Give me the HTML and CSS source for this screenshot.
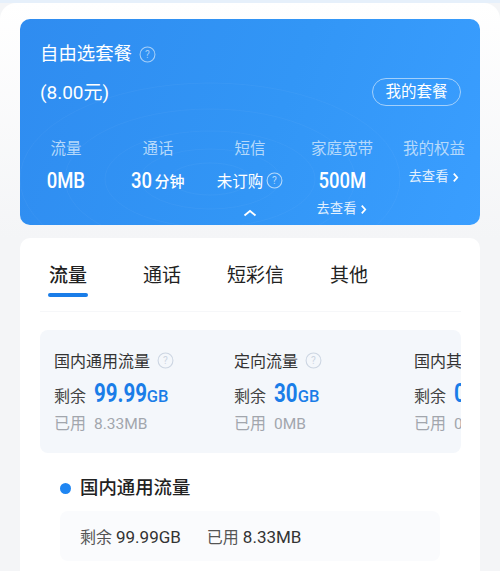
FILE: index.html
```html
<!DOCTYPE html>
<html lang="zh-CN">
<head>
    <meta charset="UTF-8" />
    <meta name="viewport" content="width=device-width, initial-scale=1" />
    <title>自由选套餐</title>
    <link rel="stylesheet" href="styles.css">
</head>
<body>
    <div class="top-panel">
        <div class="plan-card">
            <svg class="contours" viewBox="0 0 460 206" preserveAspectRatio="none" aria-hidden="true">
                <g fill="none" stroke="#fff" stroke-opacity="0.04">
                    <ellipse cx="190" cy="160" rx="40" ry="16" />
                    <ellipse cx="190" cy="160" rx="70" ry="30" />
                    <ellipse cx="190" cy="160" rx="105" ry="48" />
                    <ellipse cx="190" cy="160" rx="145" ry="70" />
                    <ellipse cx="190" cy="160" rx="190" ry="96" />
                </g>
            </svg>
            <div class="plan-title">自由选套餐
                <svg class="help help-title" viewBox="0 0 16 16"><circle cx="8" cy="8" r="7" /><text x="8" y="11.2" text-anchor="middle">?</text></svg>
            </div>
            <div class="plan-row">
                <div class="plan-price">(8.00元)</div>
                <div class="plan-btn">我的套餐</div>
            </div>
            <div class="stats">
                <div class="stat">
                    <div class="stat-label">流量</div>
                    <div class="stat-value"><span class="stat-num">0MB</span></div>
                </div>
                <div class="stat">
                    <div class="stat-label">通话</div>
                    <div class="stat-value"><span class="stat-num stat-num-left">30</span><span class="stat-unit">分钟</span></div>
                </div>
                <div class="stat">
                    <div class="stat-label">短信</div>
                    <div class="stat-value"><span class="stat-text">未订购</span>
                        <svg class="help help-stat" viewBox="0 0 16 16"><circle cx="8" cy="8" r="7" /><text x="8" y="11.2" text-anchor="middle">?</text></svg>
                    </div>
                </div>
                <div class="stat">
                    <div class="stat-label">家庭宽带</div>
                    <div class="stat-value"><span class="stat-num">500M</span></div>
                    <div class="stat-link">去查看
                        <svg class="chev" viewBox="0 0 8 12"><path d="M2 1.5 6 6 2 10.5" /></svg>
                    </div>
                </div>
                <div class="stat">
                    <div class="stat-label">我的权益</div>
                    <div class="stat-link stat-link-top">去查看
                        <svg class="chev" viewBox="0 0 8 12"><path d="M2 1.5 6 6 2 10.5" /></svg>
                    </div>
                </div>
            </div>
            <svg class="collapse" viewBox="0 0 14 8"><path d="M1.5 6.5 7 2l5.500 4.500" /></svg>
        </div>
    </div>

    <div class="detail-card">
        <div class="tabs">
            <div class="tab active">流量</div>
            <div class="tab">通话</div>
            <div class="tab">短彩信</div>
            <div class="tab">其他</div>
        </div>

        <div class="usage-box">
            <div class="usage">
                <div class="usage-name">国内通用流量
                    <svg class="help help-usage" viewBox="0 0 16 16"><circle cx="8" cy="8" r="7" /><text x="8" y="11.2" text-anchor="middle">?</text></svg>
                </div>
                <div class="usage-left">剩余<span class="usage-num usage-num-long">99.99</span><span class="usage-unit">GB</span></div>
                <div class="usage-used">已用<span class="usage-used-num">8.33MB</span></div>
            </div>
            <div class="usage">
                <div class="usage-name">定向流量
                    <svg class="help help-usage" viewBox="0 0 16 16"><circle cx="8" cy="8" r="7" /><text x="8" y="11.2" text-anchor="middle">?</text></svg>
                </div>
                <div class="usage-left">剩余<span class="usage-num">30</span><span class="usage-unit">GB</span></div>
                <div class="usage-used">已用<span class="usage-used-num">0MB</span></div>
            </div>
            <div class="usage">
                <div class="usage-name">国内其他流量</div>
                <div class="usage-left">剩余<span class="usage-num">0</span><span class="usage-unit">GB</span></div>
                <div class="usage-used">已用<span class="usage-used-num">0MB</span></div>
            </div>
        </div>

        <div class="section-title"><span class="dot"></span>国内通用流量</div>
        <div class="summary">
            <span>剩余 <b>99.99GB</b></span>
            <span>已用 <b>8.33MB</b></span>
        </div>
    </div>
</body>
</html>
```

FILE: styles.css
```css
html, body {
    height: 571px;
    overflow: hidden;
}
body {
    margin: 0;
    background-color: #f4f5f7;
    font-family: "Roboto", "Noto Sans CJK SC", sans-serif;
    color: #222;
}
.top-panel {
    background: linear-gradient(#e6f0fb 3px, transparent 3px);
    position: relative;
    padding: 19px 20px 0;
}
.top-panel::before {
    content: "";
    position: absolute;
    top: 3px;
    left: 0;
    right: 0;
    height: 235px;
    border-radius: 16px 16px 0 0;
    background: linear-gradient(#fff 0, #f4f5f7 100%);
}
.plan-card {
    position: relative;
    height: 206px;
    box-sizing: border-box;
    padding: 23px 20px 0;
    border-radius: 10px;
    background: linear-gradient(110deg, #2f8cf0 0%, #3296f6 55%, #3a9eff 100%);
    color: #fff;
    overflow: hidden;
}
.contours {
    position: absolute;
    top: 0;
    left: 0;
    width: 100%;
    height: 100%;
}
.plan-title {
    position: relative;
    display: flex;
    align-items: center;
    font-size: 18.400px;
    line-height: 24px;
}
.help {
    fill: none;
    flex: none;
}
.help circle {
    fill: none;
    stroke-width: 1;
}
.help text {
    font-family: "Roboto", sans-serif;
    font-size: 9.500px;
    stroke: none;
}
.help-title {
    width: 17px;
    height: 17px;
    margin-left: 7px;
    stroke: #a6cff8;
}
.help-title text { fill: #a6cff8; }
.plan-row {
    position: relative;
    display: flex;
    justify-content: space-between;
    align-items: flex-start;
    margin: 12px -1px 0 0;
}
.plan-price {
    padding-top: 1px;
    font-size: 19px;
    line-height: 28px;
}
.plan-btn {
    box-sizing: border-box;
    width: 89px;
    height: 28px;
    border: 1px solid #a3d0fb;
    border-radius: 14px;
    font-size: 15.500px;
    line-height: 26px;
    text-align: center;
}
.stats {
    position: relative;
    display: grid;
    grid-template-columns: repeat(5, 92px);
    margin: 31px -20px 0;
    text-align: center;
}
.stat-label {
    font-size: 15.500px;
    line-height: 22px;
    color: #b5d9fb;
}
.stat-value {
    display: flex;
    justify-content: center;
    align-items: center;
    gap: 3px;
    height: 22px;
    margin-top: 9px;
}
.stat-num {
    display: inline-block;
    font-size: 22px;
    font-weight: 500;
    transform: scaleX(0.84);
}
.stat-num-left {
    margin-right: -6px;
    transform-origin: left center;
}
.stat-unit {
    font-family: "Noto Sans CJK SC", sans-serif;
    font-size: 15px;
    font-weight: 500;
    margin-left: 1px;
}
.stat-text {
    font-family: "Noto Sans CJK SC", sans-serif;
    font-size: 15.500px;
    font-weight: 400;
}
.help-stat {
    width: 17px;
    height: 17px;
    stroke: #b5d9fb;
}
.help-stat text { fill: #b5d9fb; }
.stat-link {
    display: flex;
    justify-content: center;
    align-items: center;
    gap: 4px;
    margin-top: 9px;
    font-size: 13.300px;
    line-height: 18px;
    color: #e3f1fe;
}
.stat-link-top {
    margin-top: 8px;
}
.chev {
    width: 7px;
    height: 11px;
    fill: none;
    stroke: #fff;
    stroke-width: 2;
}
.collapse {
    position: absolute;
    left: 223px;
    top: 190px;
    width: 14px;
    height: 8px;
    fill: none;
    stroke: #fff;
    stroke-width: 1.800;
}
.detail-card {
    position: relative;
    margin: 13px 20px 0;
    padding: 0 19px 0 20px;
    height: 340px;
    background: #fff;
    border-radius: 10px 10px 0 0;
}
.tabs {
    display: flex;
    height: 74px;
    border-bottom: 1px solid #f6f7f9;
    padding-left: 9px;
    gap: 46px;
    box-sizing: border-box;
}
.tab {
    position: relative;
    padding-top: 25px;
    font-size: 19px;
    line-height: 26px;
    color: #222;
}
.tab.active {
    margin-right: 10px;
    font-weight: 500;
}
.tab.active::after {
    content: "";
    position: absolute;
    left: -1px;
    right: -1px;
    top: 55px;
    height: 4px;
    border-radius: 2px;
    background: #1a7de8;
}
.usage-box {
    display: flex;
    margin-top: 18px;
    height: 123px;
    padding-left: 14px;
    background: #f4f7fb;
    border-radius: 8px;
    overflow: hidden;
    box-sizing: border-box;
}
.usage {
    flex: 0 0 180px;
    padding-top: 18px;
    white-space: nowrap;
}
.usage-name {
    display: flex;
    align-items: center;
    height: 24px;
    font-size: 16px;
    color: #333;
}
.help-usage {
    width: 17px;
    height: 17px;
    margin-left: 7px;
    stroke: #ccd5e2;
}
.help-usage text { fill: #ccd5e2; }
.usage-left {
    display: flex;
    align-items: baseline;
    height: 34px;
    margin-top: 5px;
    font-size: 16px;
    line-height: 34px;
    color: #444;
}
.usage-num {
    display: inline-block;
    margin: 0 -7px 0 8px;
    font-size: 25px;
    font-weight: 700;
    color: #1a7de8;
    transform: scaleX(0.82);
    transform-origin: left center;
}
.usage-num-long {
    margin-right: -14px;
}
.usage-unit {
    margin-left: 2px;
    font-size: 16.500px;
    font-weight: 500;
    color: #1a7de8;
}
.usage-used {
    font-size: 16px;
    line-height: 24px;
    margin-top: 1px;
    color: #a2a6ad;
}
.usage-used-num {
    margin-left: 8px;
    font-size: 15.500px;
}
.section-title {
    display: flex;
    align-items: center;
    margin-top: 21px;
    padding-left: 20px;
    font-size: 18.400px;
    font-weight: 500;
    line-height: 28px;
    color: #222;
}
.dot {
    width: 11px;
    height: 11px;
    margin-right: 9px;
    border-radius: 50%;
    background: #1f86f2;
}
.summary {
    display: flex;
    gap: 26px;
    align-items: center;
    height: 50px;
    margin: 9px 0 0 20px;
    padding-left: 20px;
    width: 380px;
    box-sizing: border-box;
    border-radius: 8px;
    background: #fafbfd;
    font-size: 16px;
    color: #555;
}
.summary b {
    font-size: 17px;
    font-weight: 400;
    color: #333;
}
```
